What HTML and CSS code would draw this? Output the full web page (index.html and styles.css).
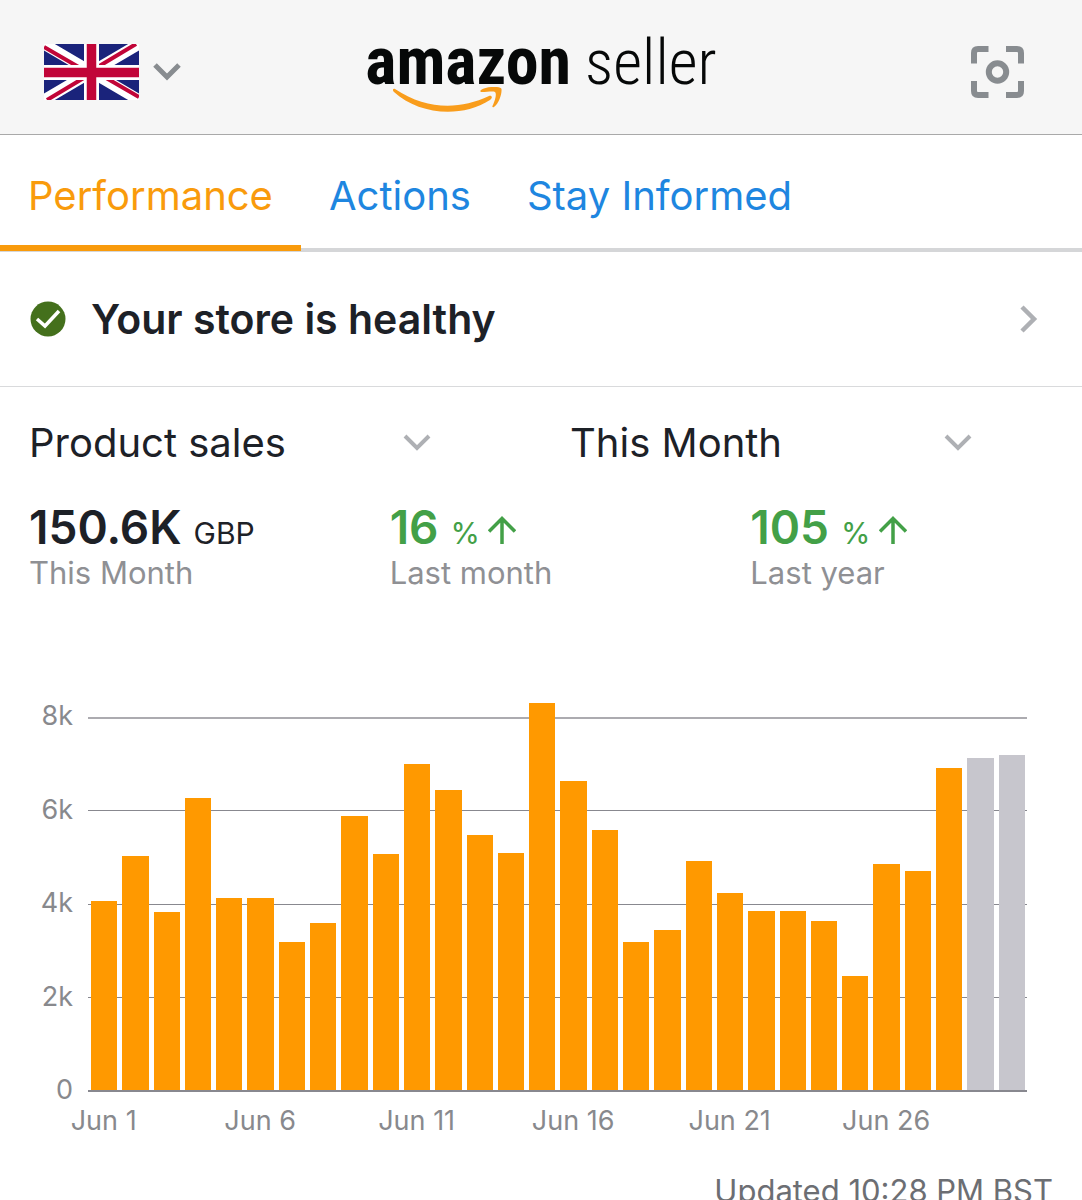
FILE: index.html
```html
<!DOCTYPE html>
<html lang="en">
<head>
<meta charset="utf-8">
<meta name="viewport" content="width=device-width, initial-scale=1">
<title>Amazon Seller</title>
<link rel="stylesheet" href="styles.css">
</head>
<body>
<header class="topbar">
  <button class="icon-button market" type="button" aria-label="Marketplace: United Kingdom">
    <svg width="95" height="56" viewBox="0 0 95 56" aria-hidden="true">
      <rect width="95" height="56" fill="#1a237b"/>
      <path d="M0 0L95 56M95 0L0 56" stroke="#fff" stroke-width="11"/>
      <path d="M0 3L38 25M95 53L57 31M92 0L52 24M3 56L43 32" stroke="#c10538" stroke-width="4"/>
      <path d="M47.500 0V56M0 28.500H95" stroke="#fff" stroke-width="15"/>
      <path d="M47.500 0V56M0 28.500H95" stroke="#c10538" stroke-width="9.500"/>
    </svg>
    <svg width="28" height="18" viewBox="0 0 28 18" aria-hidden="true"><path d="M2 2L14 14L26 2" fill="none" stroke="#888c90" stroke-width="5"/></svg>
  </button>
  <div class="logo">
    <span class="logo-brand">amazon<svg class="smile" width="110" height="26" viewBox="0 0 110 26" aria-hidden="true">
      <path d="M2 2C34 23 66 23 96 9C99 8 100 11 97 13C67 32 25 27 1 5C-1 3 0 1 2 2Z" fill="#f99d1c"/>
      <path d="M88 3C94 -1 108 -1 108.500 2C109 7 106 16 101 20C99 21 99 19 100 18C102 13 104 7 102 5C100 4 94 5 89 5C87 5 87 4 88 3Z" fill="#f99d1c"/>
    </svg></span>
    <span class="logo-seller">seller</span>
  </div>
  <button class="icon-button scan" type="button" aria-label="Scan a product">
    <svg width="54" height="54" viewBox="0 0 54 54" fill="none" stroke="#888c90" stroke-width="6" aria-hidden="true">
      <path d="M18.500 4H8Q4 4 4 8V18.500M36 4H47Q51 4 51 8V18.500M18.500 50H8Q4 50 4 46V36M36 50H47Q51 50 51 46V36"/>
      <circle cx="27.500" cy="27" r="8.700"/>
    </svg>
  </button>
</header>
<nav class="tabs">
  <a class="tab tab-active" href="#performance" aria-current="page">Performance</a>
  <a class="tab" href="#actions">Actions</a>
  <a class="tab" href="#stay-informed">Stay Informed</a>
</nav>
<main>
  <a class="health" href="#health">
    <svg width="36" height="36" viewBox="0 0 36 36" aria-hidden="true"><circle cx="18" cy="18" r="17.500" fill="#44701c"/><path d="M7 18L15 25L29 10" fill="none" stroke="#fff" stroke-width="3.500"/></svg>
    <span class="health-text">Your store is healthy</span>
    <svg width="18" height="28" viewBox="0 0 18 28" aria-hidden="true"><path d="M2 2L14 14L2 26" fill="none" stroke="#aeb0b4" stroke-width="4.500"/></svg>
  </a>
  <section class="filters">
    <div class="filter">
      <select class="filter-select" aria-label="Metric"><option>Product sales</option></select>
      <svg class="filter-arrow" width="28" height="18" viewBox="0 0 28 18" aria-hidden="true"><path d="M2 2L14 14L26 2" fill="none" stroke="#aeb0b4" stroke-width="4"/></svg>
    </div>
    <div class="filter">
      <select class="filter-select" aria-label="Period"><option>This Month</option></select>
      <svg class="filter-arrow" width="28" height="18" viewBox="0 0 28 18" aria-hidden="true"><path d="M2 2L14 14L26 2" fill="none" stroke="#aeb0b4" stroke-width="4"/></svg>
    </div>
  </section>
  <section class="metrics">
    <div class="metric">
      <div class="metric-value"><strong>150.6K</strong><span class="unit">GBP</span></div>
      <div class="metric-label">This Month</div>
    </div>
    <div class="metric">
      <div class="metric-value metric-up"><strong>16</strong><span class="percent">%</span><svg width="28" height="28" viewBox="0 0 28 28" aria-label="up"><path d="M14 28V3M1 15.500L14 2.500L27 15.500" fill="none" stroke="#43a047" stroke-width="3.500"/></svg></div>
      <div class="metric-label">Last month</div>
    </div>
    <div class="metric">
      <div class="metric-value metric-up"><strong>105</strong><span class="percent">%</span><svg width="28" height="28" viewBox="0 0 28 28" aria-label="up"><path d="M14 28V3M1 15.500L14 2.500L27 15.500" fill="none" stroke="#43a047" stroke-width="3.500"/></svg></div>
      <div class="metric-label">Last year</div>
    </div>
  </section>
  <section class="chart" aria-label="Product sales by day">
    <div class="y-axis"><span>8k</span><span>6k</span><span>4k</span><span>2k</span><span>0</span></div>
    <div class="plot">
      <div class="gridlines"><i></i><i></i><i></i><i></i></div>
      <div class="bars">
        <div class="bar" style="height:50.8%"></div>
        <div class="bar" style="height:62.8%"></div>
        <div class="bar" style="height:47.7%"></div>
        <div class="bar" style="height:78.3%"></div>
        <div class="bar" style="height:51.6%"></div>
        <div class="bar" style="height:51.6%"></div>
        <div class="bar" style="height:39.6%"></div>
        <div class="bar" style="height:44.7%"></div>
        <div class="bar" style="height:73.5%"></div>
        <div class="bar" style="height:63.4%"></div>
        <div class="bar" style="height:87.4%"></div>
        <div class="bar" style="height:80.5%"></div>
        <div class="bar" style="height:68.4%"></div>
        <div class="bar" style="height:63.6%"></div>
        <div class="bar" style="height:103.7%"></div>
        <div class="bar" style="height:82.9%"></div>
        <div class="bar" style="height:69.8%"></div>
        <div class="bar" style="height:39.6%"></div>
        <div class="bar" style="height:42.8%"></div>
        <div class="bar" style="height:61.5%"></div>
        <div class="bar" style="height:52.7%"></div>
        <div class="bar" style="height:47.9%"></div>
        <div class="bar" style="height:48.1%"></div>
        <div class="bar" style="height:45.2%"></div>
        <div class="bar" style="height:30.7%"></div>
        <div class="bar" style="height:60.7%"></div>
        <div class="bar" style="height:58.8%"></div>
        <div class="bar" style="height:86.4%"></div>
        <div class="bar bar-forecast" style="height:89%"></div>
        <div class="bar bar-forecast" style="height:89.8%"></div>
      </div>
    </div>
    <div class="x-axis">
      <div class="x-group"><span>Jun 1</span></div>
      <div class="x-group"><span>Jun 6</span></div>
      <div class="x-group"><span>Jun 11</span></div>
      <div class="x-group"><span>Jun 16</span></div>
      <div class="x-group"><span>Jun 21</span></div>
      <div class="x-group"><span>Jun 26</span></div>
    </div>
  </section>
  <p class="updated">Updated 10:28 PM BST</p>
</main>
</body>
</html>
```
FILE: styles.css
```css
* { box-sizing: border-box; }

body {
  margin: 0;
  background: #fff;
  color: #1d2127;
  font-family: Inter, "Liberation Sans", sans-serif;
}

svg { display: block; flex: none; }
a { text-decoration: none; color: inherit; }

.topbar {
  display: grid;
  grid-template-columns: 1fr auto 1fr;
  align-items: center;
  height: 135px;
  padding: 10px 44px 0;
  background: #f6f6f6;
  border-bottom: 1px solid #a9a9a9;
}

.icon-button {
  display: flex;
  align-items: center;
  padding: 0;
  border: 0;
  background: none;
}

.market { gap: 14px; justify-self: start; }
.scan { justify-self: end; margin-right: 14px; }

.logo {
  display: flex;
  align-items: baseline;
  gap: 14px;
  padding-bottom: 20px;
  color: #060808;
  font-family: "Roboto Condensed", Roboto, sans-serif;
  line-height: 80px;
}

.logo-brand {
  position: relative;
  font-size: 66px;
  font-weight: 700;
}

.smile { position: absolute; left: 28px; top: 65px; }

.logo-seller {
  font-size: 63px;
  font-weight: 300;
}

.tabs {
  display: flex;
  height: 117px;
  box-shadow: inset 0 -4px #d5d6d8;
}

.tab {
  padding: 35px 28px 0;
  color: #1e86e0;
  font-size: 40px;
  line-height: 52px;
}

.tab-active {
  margin-bottom: 1px;
  color: #f99b0c;
  border-bottom: 6px solid #f99b0c;
}

.health {
  display: flex;
  align-items: center;
  gap: 25px;
  height: 135px;
  padding: 0 44px 0 30px;
  border-bottom: 1px solid #d9dadc;
}

.health-text {
  flex: 1;
  font-size: 41px;
  font-weight: 600;
}

.filters {
  display: grid;
  grid-template-columns: 1fr 1fr;
  padding-top: 28px;
}

.filter {
  display: grid;
  align-items: center;
  margin: 0 110px 0 29px;
}

.filter-select,
.filter-arrow { grid-area: 1 / 1; }

.filter-select {
  appearance: none;
  width: 100%;
  height: 56px;
  padding: 0;
  border: 0;
  background: none;
  color: inherit;
  font: 400 40px/56px Inter, "Liberation Sans", sans-serif;
}

.filter-arrow {
  justify-self: end;
  pointer-events: none;
}

.metrics {
  display: grid;
  grid-template-columns: 1fr 1fr 1fr;
  padding-top: 32px;
}

.metric { padding-left: 29px; }

.metric-value {
  display: flex;
  align-items: baseline;
  font-size: 46px;
  line-height: 48px;
}

.metric-value strong { font-weight: 600; }
.metric-up { color: #43a047; }

.unit,
.percent {
  margin-left: 12px;
  font-size: 30px;
}

.percent { margin-right: 8px; }

.metric-label {
  color: #8f9094;
  font-size: 31px;
  line-height: 32px;
}

.chart {
  display: grid;
  grid-template-columns: 73px 1fr;
  column-gap: 15px;
  padding: 128px 55px 0 0;
  color: #88898d;
  font-size: 27px;
}

.y-axis {
  display: flex;
  flex-direction: column;
  justify-content: space-between;
  align-items: flex-end;
  margin: -17px 0 -14px;
  line-height: 32px;
}

.plot {
  display: grid;
  height: 375px;
  border-bottom: 2px solid #88888f;
}

.gridlines,
.bars {
  grid-area: 1 / 1;
  display: grid;
  min-height: 0;
}

.gridlines { grid-template-rows: repeat(4, 1fr); }
.gridlines i { border-top: 1px solid #88888f; }
.gridlines i:first-child { border-top: 2px solid #acabb0; }

.bars {
  grid-template-columns: repeat(30, 1fr);
  column-gap: 5px;
  align-items: end;
  height: 373px;
  padding: 0 2px 0 3px;
}

.bar { background: #ff9900; }
.bar-forecast { background: #c7c6cd; }

.x-axis {
  grid-column: 2;
  display: grid;
  grid-template-columns: repeat(6, 1fr);
  padding-top: 11px;
  line-height: 36px;
}

.x-group span {
  display: flex;
  justify-content: center;
  width: 20%;
  white-space: nowrap;
}

.updated {
  margin: 32px 29px 0;
  color: #6c6e73;
  font-size: 31px;
  line-height: 40px;
  text-align: right;
}
```
